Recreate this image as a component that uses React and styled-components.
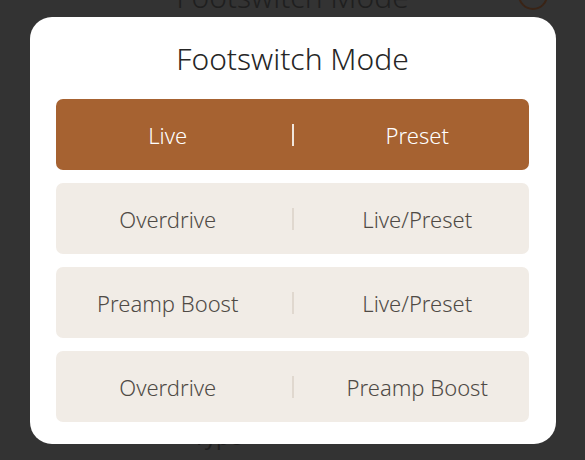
import React from "react";
import styled, { createGlobalStyle } from "styled-components";

const Global = createGlobalStyle`
  html, body { margin: 0; padding: 0; background: #333333; overflow: hidden; }
  body { font-family: "Noto Sans", "Open Sans", sans-serif; }
`;

const Page = styled.div`
  position: relative;
  width: 585px;
  height: 460px;
  background: #333333;
  overflow: hidden;
`;

const BehindHeader = styled.div`
  display: flex;
  align-items: center;
  justify-content: center;
  position: relative;
  height: 40px;
  margin-top: -24px;
  color: #1f1f1f;
  font-size: 30px;
  font-weight: 300;
`;

const BehindIcon = styled.div`
  position: absolute;
  right: 37px;
  top: 4px;
  width: 26px;
  height: 26px;
  border: 2px solid #3a2416;
  border-radius: 50%;
`;

const BehindFooter = styled.div`
  position: absolute;
  left: 193px;
  top: 421px;
  color: #1f1f1f;
  font-size: 22px;
`;

const Modal = styled.div`
  position: absolute;
  left: 30px;
  top: 17px;
  width: 526px;
  box-sizing: border-box;
  padding: 0 27px 22px 26px;
  background: #ffffff;
  border-radius: 22px;
  display: flex;
  flex-direction: column;
`;

const Title = styled.h1`
  margin: 0;
  height: 82px;
  display: flex;
  align-items: center;
  justify-content: center;
  font-size: 30px;
  font-weight: 300;
  color: #262626;
`;

const List = styled.div`
  display: flex;
  flex-direction: column;
  gap: 13px;
`;

const Row = styled.button`
  display: grid;
  grid-template-columns: 1fr 2px 1fr;
  column-gap: 12px;
  align-items: center;
  height: 71px;
  padding: 0;
  border: none;
  border-radius: 7px;
  background: ${(p) => (p.$active ? "#a66231" : "#f1ece6")};
  color: ${(p) => (p.$active ? "#ffffff" : "#4f4a45")};
  font-family: "Noto Sans", "Open Sans", sans-serif;
  font-size: 22px;
  font-weight: 300;
  cursor: pointer;
`;

const Cell = styled.span`
  text-align: center;
`;

const Divider = styled.span`
  width: 2px;
  height: 22px;
  background: ${(p) => (p.$active ? "#f1e6dc" : "#e0d8cf")};
`;

const modes = [
  ["Live", "Preset"],
  ["Overdrive", "Live/Preset"],
  ["Preamp Boost", "Live/Preset"],
  ["Overdrive", "Preamp Boost"],
];

export default function App() {
  return (
    <Page>
      <Global />
      <BehindHeader>
        Footswitch Mode
        <BehindIcon />
      </BehindHeader>
      <BehindFooter>Type</BehindFooter>
      <Modal>
        <Title>Footswitch Mode</Title>
        <List>
          {modes.map(([a, b], i) => (
            <Row key={i} $active={i === 0}>
              <Cell>{a}</Cell>
              <Divider $active={i === 0} />
              <Cell>{b}</Cell>
            </Row>
          ))}
        </List>
      </Modal>
    </Page>
  );
}
